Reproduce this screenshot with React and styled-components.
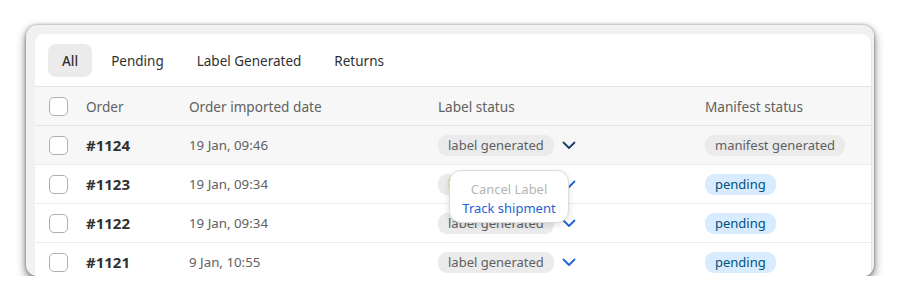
import React from "react";
import styled, { createGlobalStyle } from "styled-components";

const Global = createGlobalStyle`
  html, body { margin: 0; padding: 0; background: #ffffff; }
  body { font-family: "Noto Sans", "Open Sans", sans-serif; -webkit-font-smoothing: antialiased; }
`;

const Stage = styled.div`
  padding: 25px 26px 0 26px;
`;

const Frame = styled.div`
  width: 848px;
  height: 251px;
  background: #f1f1f1;
  border-radius: 11px;
  overflow: hidden;
  box-shadow: 0 4px 10px rgba(0, 0, 0, 0.55), 0 0 3px rgba(0, 0, 0, 0.35);
  padding: 9px 2px 0 9px;
  box-sizing: border-box;
`;

const Card = styled.div`
  background: #ffffff;
  border-top-left-radius: 9px;
  border-top-right-radius: 9px;
  height: 100%;
  overflow: hidden;
  border-right: 1px solid #e6e6e6;
`;

const Tabs = styled.div`
  display: flex;
  gap: 5px;
  align-items: center;
  height: 53px;
  box-sizing: border-box;
  padding: 1px 13px 0;
  border-bottom: 1px solid #e3e3e3;
`;

const Tab = styled.div`
  height: 33px;
  display: flex;
  align-items: center;
  padding: 0 14px;
  border-radius: 8px;
  font-size: 13.5px;
  color: #303030;
  font-weight: ${(p) => (p.$active ? 500 : 400)};
  background: ${(p) => (p.$active ? "#ebebeb" : "transparent")};
`;

const Grid = styled.div`
  display: grid;
  grid-template-columns: 37px 103px 249px 267px 1fr;
  align-items: center;
  padding-left: 14px;
  box-sizing: border-box;
`;

const HeadRow = styled(Grid)`
  height: 39px;
  background: #f7f7f7;
  border-bottom: 1px solid #e3e3e3;
  font-size: 13.6px;
  color: #616161;
`;

const Row = styled(Grid)`
  height: 39px;
  background: ${(p) => (p.$hover ? "#f7f7f7" : "#ffffff")};
  border-bottom: 1px solid #ebebeb;
`;

const Check = styled.span`
  display: block;
  width: 17px;
  height: 17px;
  border: 1px solid #b0b0b0;
  border-radius: 5px;
  background: #fff;
`;

const OrderNo = styled.span`
  font-size: 15px;
  font-weight: 700;
  color: #303030;
`;

const DateText = styled.span`
  font-size: 13.3px;
  color: #616161;
`;

const Cell = styled.div`
  position: relative;
  display: flex;
  align-items: center;
  gap: 8px;
`;

const Badge = styled.span`
  display: inline-flex;
  align-items: center;
  height: 21px;
  padding: 0 10px;
  border-radius: 9px;
  font-size: 13px;
  background: ${(p) => (p.$tone === "info" ? "#d9ecff" : "#ebebeb")};
  color: ${(p) => (p.$tone === "info" ? "#00527c" : "#616161")};
`;

const Chevron = styled.svg`
  width: 14px;
  height: 14px;
  display: block;
`;

const Popover = styled.div`
  position: absolute;
  left: 11px;
  top: -4px;
  z-index: 5;
  width: 120px;
  height: 53px;
  box-sizing: border-box;
  background: #ffffff;
  border: 1px solid #dcdcdc;
  border-radius: 12px;
  box-shadow: 0 2px 6px rgba(0, 0, 0, 0.12);
  display: flex;
  flex-direction: column;
  align-items: center;
  justify-content: center;
  font-size: 13px;
  line-height: 19px;
  padding-top: 6px;
`;

const MenuItem = styled.span`
  color: ${(p) => (p.$disabled ? "#b5b5b5" : "#1f63d6")};
  white-space: nowrap;
`;

const rows = [
  { id: "#1124", date: "19 Jan, 09:46", manifest: "manifest generated", tone: "neutral", hover: true, dark: true },
  { id: "#1123", date: "19 Jan, 09:34", manifest: "pending", tone: "info", popover: true },
  { id: "#1122", date: "19 Jan, 09:34", manifest: "pending", tone: "info" },
  { id: "#1121", date: "9 Jan, 10:55", manifest: "pending", tone: "info" },
];

function Down({ dark }) {
  return (
    <Chevron viewBox="0 0 14 14" fill="none">
      <path
        d="M1.5 4.5 L7 10 L12.5 4.5"
        stroke={dark ? "#1d3b6a" : "#1f63d6"}
        strokeWidth="1.8"
        strokeLinecap="round"
        strokeLinejoin="round"
      />
    </Chevron>
  );
}

export default function App() {
  return (
    <>
      <Global />
      <Stage>
        <Frame>
          <Card>
            <Tabs>
              <Tab $active>All</Tab>
              <Tab>Pending</Tab>
              <Tab>Label Generated</Tab>
              <Tab>Returns</Tab>
            </Tabs>
            <HeadRow>
              <Check />
              <span>Order</span>
              <span>Order imported date</span>
              <span>Label status</span>
              <span>Manifest status</span>
            </HeadRow>
            {rows.map((r) => (
              <Row key={r.id} $hover={r.hover}>
                <Check />
                <OrderNo>{r.id}</OrderNo>
                <DateText>{r.date}</DateText>
                <Cell>
                  <Badge>label generated</Badge>
                  <Down dark={r.dark} />
                  {r.popover && (
                    <Popover>
                      <MenuItem $disabled>Cancel Label</MenuItem>
                      <MenuItem>Track shipment</MenuItem>
                    </Popover>
                  )}
                </Cell>
                <Cell>
                  <Badge $tone={r.tone}>{r.manifest}</Badge>
                </Cell>
              </Row>
            ))}
          </Card>
        </Frame>
      </Stage>
    </>
  );
}
